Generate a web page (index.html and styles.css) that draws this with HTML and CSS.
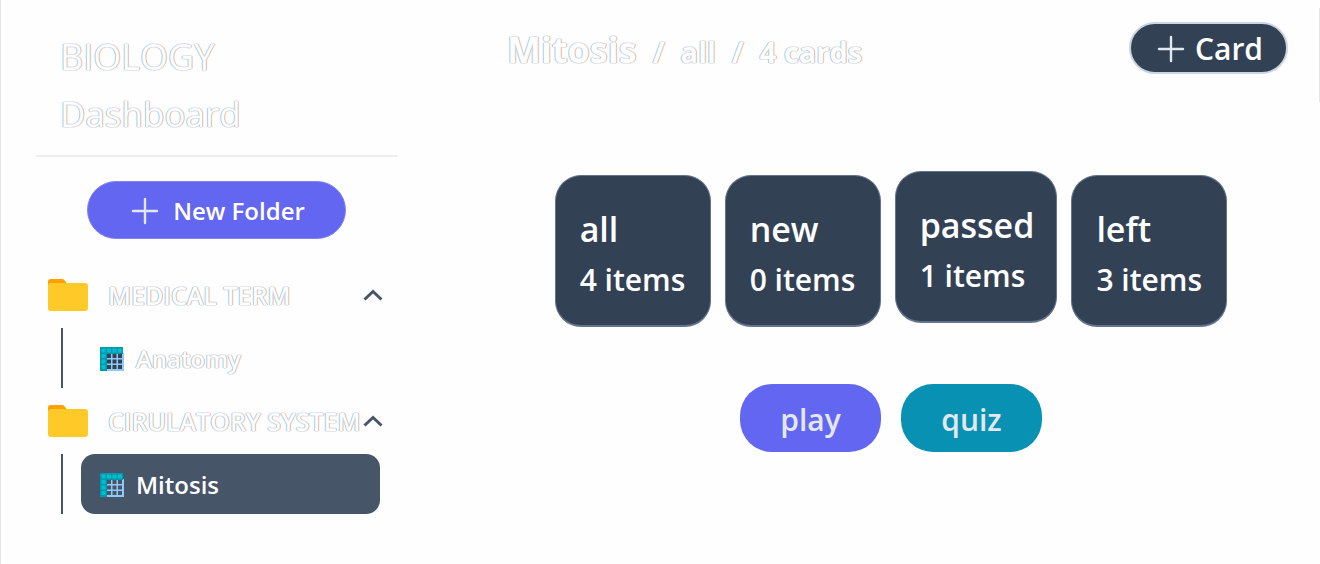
FILE: index.html
```html
<!DOCTYPE html>
<html lang="en">
<head>
<meta charset="utf-8">
<title>Biology Dashboard</title>
<link rel="stylesheet" href="styles.css">
</head>
<body>
<svg class="sprite" aria-hidden="true">
  <symbol id="plus" viewBox="0 0 28 28"><path d="M14 2v24M2 14h24" fill="none" stroke="currentColor" stroke-width="2.4" stroke-linecap="round"/></symbol>
  <symbol id="folder" viewBox="0 0 40 32"><path d="M0 20V3a3 3 0 0 1 3-3h11q1.500 0 2.500 1.200L20 6v14z" fill="#ffa000"/><rect y="4" width="40" height="28" rx="3" fill="#ffca28"/></symbol>
  <symbol id="chevron" viewBox="0 0 20 12"><path d="M1.500 10.500 10 2.500l8.500 8" fill="none" stroke="#475569" stroke-width="3"/></symbol>
  <symbol id="sheet" viewBox="0 0 24 24">
    <path d="M6 6h18v18H6z" fill="#90caf9"/>
    <path d="M7 6h4v5H7zm5.500 0h4v5h-4zm5.500 0h4v5h-4zM7 12.500h4v4H7zm5.500 0h4v4h-4zm5.500 0h4v4h-4zM7 18h4v4H7zm5.500 0h4v4h-4zm5.500 0h4v4h-4z" fill="currentColor"/>
    <path d="M0 0h23v7H7v17H0z" fill="#0097a7"/>
    <path d="M1.500 1.500h4v4h-4zm5.500 0h4v4H7zm5.500 0h4v4h-4zm5.500 0h4v4h-4zM1.500 7h4v4h-4zm0 5.500h4v4h-4zm0 5.500h4v4h-4z" fill="#00bcd4"/>
  </symbol>
</svg>
<div class="app">
  <aside class="sidebar">
    <h1 class="brand ghost"><span>BIOLOGY</span><span class="brand-sub">Dashboard</span></h1>
    <button class="new-folder" type="button"><svg class="plus"><use href="#plus"/></svg>New Folder</button>
    <nav>
      <button class="folder" type="button"><svg class="folder-icon"><use href="#folder"/></svg><span class="folder-name ghost">MEDICAL TERM</span><svg class="chevron"><use href="#chevron"/></svg></button>
      <div class="branch"><a class="deck" href="#anatomy"><svg class="sheet"><use href="#sheet"/></svg><span class="ghost">Anatomy</span></a></div>
      <button class="folder" type="button"><svg class="folder-icon"><use href="#folder"/></svg><span class="folder-name ghost">CIRULATORY SYSTEM</span><svg class="chevron"><use href="#chevron"/></svg></button>
      <div class="branch"><a class="deck active" href="#mitosis"><svg class="sheet"><use href="#sheet"/></svg><span>Mitosis</span></a></div>
    </nav>
  </aside>
  <main class="main">
    <header class="topbar">
      <h2 class="crumbs ghost"><span class="crumb-title">Mitosis</span><span>/</span><span>all</span><span>/</span><span>4 cards</span></h2>
      <button class="add-card" type="button"><svg class="plus"><use href="#plus"/></svg>Card</button>
    </header>
    <section class="stats">
      <button class="stat" type="button"><span class="stat-name">all</span><span>4 items</span></button>
      <button class="stat" type="button"><span class="stat-name">new</span><span>0 items</span></button>
      <button class="stat raised" type="button"><span class="stat-name">passed</span><span>1 items</span></button>
      <button class="stat" type="button"><span class="stat-name">left</span><span>3 items</span></button>
    </section>
    <div class="actions">
      <button class="action play" type="button">play</button>
      <button class="action quiz" type="button">quiz</button>
    </div>
  </main>
</div>
</body>
</html>
```
FILE: styles.css
```css
* { box-sizing: border-box; }
body {
  margin: 0;
  background: #fefefe;
  color: #fff;
  font-family: "Open Sans", "Noto Sans", sans-serif;
  font-weight: 600;
}
button { font: inherit; color: inherit; border: 0; background: none; padding: 0; }
h1, h2 { margin: 0; }
a { color: inherit; text-decoration: none; }
svg { flex: none; display: block; }
.sprite { position: absolute; width: 0; height: 0; }
.ghost { color: #fefefe; text-shadow: -1px 0 #9ccdf0, 1px 0 #e2b99c, 0 -1px #e4e6ee, 0 1px #e4e6ee; }

.app { display: grid; grid-template-columns: 462px 1fr; min-height: 100vh; border-left: 1px solid #e5e5e5; }
.app::after { content: ""; position: absolute; top: 8px; right: 0; width: 1px; height: 94px; background: #e5e5e5; }
.sidebar { padding: 28px 66px 0 35px; }
.brand { display: grid; padding: 0 0 13px 24px; border-bottom: 2px solid #eee; font-size: 36px; line-height: 57px; font-weight: 400; }
.brand-sub { font-size: 35px; }
.new-folder {
  display: flex; align-items: center; justify-content: center; gap: 14px;
  width: 259px; height: 58px; margin: 24px auto 23px;
  border: 1px solid #8183f4; border-radius: 29px; padding: 1px 0 0 3px;
  background: #6366f1; font-size: 24px;
}
.plus { width: 28px; height: 28px; color: #e2e8f0; }
.folder { display: flex; align-items: center; width: 100%; height: 66px; padding: 0 14px 0 12px; text-align: left; }
.folder-icon { width: 40px; height: 32px; margin-right: 20px; }
.folder-name { flex: 1; min-width: 0; font-size: 25px; white-space: nowrap; }
.chevron { width: 20px; height: 12px; }
.branch { margin: 0 17px 0 25px; padding-left: 18px; border-left: 2px solid #475569; }
.deck { display: flex; align-items: center; gap: 12px; height: 60px; padding: 1px 0 0 19px; border-radius: 14px; font-size: 24px; }
.deck.active { background: #475569; }
.sheet { width: 24px; height: 24px; color: #334155; }
.active .sheet { color: #475569; }

.topbar { display: flex; align-items: center; justify-content: space-between; padding: 22px 32px 0 44px; }
.crumbs { display: flex; align-items: baseline; gap: 16px; padding-top: 2px; font-size: 29px; }
.crumb-title { font-size: 36px; }
.add-card {
  display: flex; align-items: center; justify-content: center; gap: 10px;
  width: 159px; height: 52px; padding: 1px 0 0 3px;
  border: 2px solid #cbd5e1; border-radius: 26px;
  background: #334155; font-size: 30px;
}
.stats { display: flex; justify-content: center; gap: 14px; margin: 101px 1px 0 0; }
.stat {
  display: flex; flex-direction: column; justify-content: center;
  min-width: 156px; height: 152px; padding: 7px 24px 0;
  border: 1px solid #64748b; border-bottom-width: 2px; border-radius: 26px;
  background: #334155; font-size: 30px; line-height: 50px; text-align: left;
}
.stat-name { font-size: 34px; line-height: 52px; }
.raised { padding-right: 22px; transform: translateY(-4px); }
.actions { display: flex; justify-content: center; gap: 20px; margin: 57px 1px 0 0; }
.action { width: 141px; height: 68px; padding-top: 2px; border-radius: 32px; color: #e2e8f0; font-size: 30px; }
.play { background: #6366f1; }
.quiz { background: #0891b2; }
```
